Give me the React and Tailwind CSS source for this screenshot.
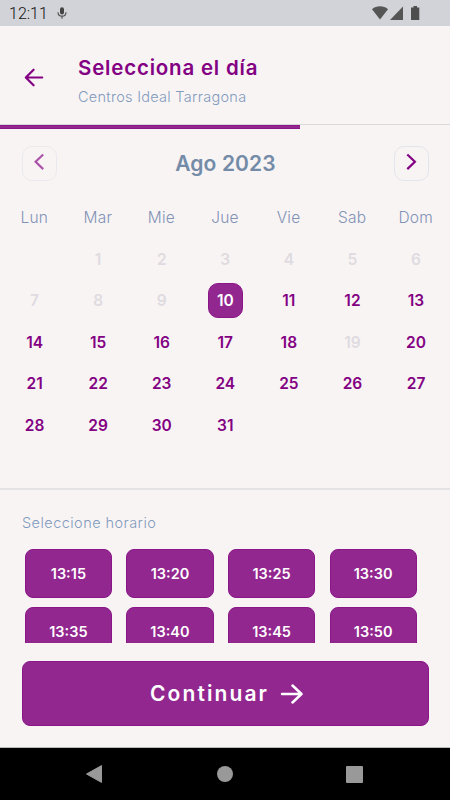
import React from 'react';
import clsx from 'clsx';

const weekdays = ['Lun', 'Mar', 'Mie', 'Jue', 'Vie', 'Sab', 'Dom'];

// August 2023 starts on a Tuesday
const days = [null, ...Array.from({ length: 31 }, (_, i) => i + 1)];
const unavailable = [1, 2, 3, 4, 5, 6, 7, 8, 9, 19];
const selectedDay = 10;

const slots = ['13:15', '13:20', '13:25', '13:30', '13:35', '13:40', '13:45', '13:50'];

function StatusBar() {
  return (
    <div className="h-[26px] shrink-0 bg-[#d2d3d8] flex items-center pl-[9px] pr-[30px]">
      <span className="w-[38px] font-['Roboto',sans-serif] font-light text-[16px] leading-[26px] text-[#111] mt-[2px]">12:11</span>
      <svg className="ml-[10px] w-[10px] h-[14px]" viewBox="0 0 10 14" fill="none">
        <rect x="3" y="1.2" width="4" height="7.3" rx="2" fill="#444" />
        <path d="M1 6.2c0 2.4 1.7 4 4 4s4-1.6 4-4M5 10.2v2.6" stroke="#555" strokeWidth="1.2" />
      </svg>
      <div className="ml-auto flex items-center">
        <svg className="w-[17px] h-[14px]" viewBox="0 0 17 14">
          <path d="M8 13.6L0 3.2C4.500-.6 11.500-.6 16 3.200z" fill="#555" />
        </svg>
        <svg className="ml-[1px] w-[14px] h-[14px]" viewBox="0 0 14 14">
          <path d="M13 .5V14H0z" fill="#555" />
        </svg>
        <svg className="ml-[7px] w-[9px] h-[14px]" viewBox="0 0 9 14">
          <path d="M2.500 0h3.500v1.500h2.300V14H0V1.500h2.500z" fill="#4d4d4d" />
        </svg>
      </div>
    </div>
  );
}

function Header() {
  return (
    <div className="h-[98px] shrink-0 flex pl-6">
      <button className="w-5 h-5 mt-[41px]">
        <svg className="w-5 h-5" viewBox="0 0 20 20" fill="none" stroke="#830083" strokeWidth="2.2" strokeLinecap="round" strokeLinejoin="round">
          <path d="M18.2 10.500H2M9.600 2.700L1.800 10.500l7.800 7.800" />
        </svg>
      </button>
      <div className="ml-[34px] pt-[28px]">
        <h1 className="text-[20.5px] leading-[28px] font-semibold tracking-[0.8px] text-[#830083] whitespace-nowrap">
          Selecciona el día
        </h1>
        <p className="mt-[2px] text-[14.5px] leading-[26px] font-light tracking-[0.28px] text-[#829bbd] whitespace-nowrap">
          Centros Ideal Tarragona
        </p>
      </div>
    </div>
  );
}

function MonthButton({ path, disabled }) {
  return (
    <button
      className={clsx(
        'w-[35px] h-[35px] rounded-[10px] border border-[#e3e5ec] flex justify-center pt-[6px]',
        disabled && 'opacity-65'
      )}
    >
      <svg className="w-[18px] h-[18px]" viewBox="0 0 18 18" fill="none" stroke="#830083" strokeWidth="2.2">
        <path d={path} />
      </svg>
    </button>
  );
}

function Calendar() {
  return (
    <div className="h-[359px] shrink-0">
      <div className="flex items-center justify-between pl-[22px] pr-[21px] pt-[17px]">
        <MonthButton path="M12.2 1.500L4.600 8.800l7.600 7.300" disabled />
        <h2 className="text-[21px] leading-[35px] font-semibold tracking-[0.1px] text-[#748ba7]">Ago 2023</h2>
        <MonthButton path="M5.300 1.500l7.600 7.300-7.600 7.300" />
      </div>
      <div className="grid grid-cols-7 px-[2.5px] mt-[26px]">
        {weekdays.map((day) => (
          <div key={day} className="text-center text-[15.5px] leading-[22px] tracking-[0.2px] text-[#8192b5] font-light">
            {day}
          </div>
        ))}
      </div>
      <div className="grid grid-cols-7 auto-rows-[41.5px] pl-[2.8px] pr-[2.2px] mt-[9.6px]">
        {days.map((day, i) => (
          <div key={i} className="flex items-center justify-center">
            {day && (
              <span
                className={clsx(
                  'w-[35px] h-[35px] rounded-[10px] flex items-center justify-center text-[15.5px] font-semibold',
                  day === selectedDay && 'bg-[#92278f] border border-[#8a1687] text-white',
                  day !== selectedDay && (unavailable.includes(day) ? 'text-[#dfdbe0]' : 'text-[#830083]')
                )}
              >
                {day}
              </span>
            )}
          </div>
        ))}
      </div>
    </div>
  );
}

export default function App() {
  return (
    <div className="w-[450px] h-[800px] overflow-hidden flex flex-col bg-[#f8f4f4] font-['Inter',sans-serif]">
      <StatusBar />
      <Header />

      {/* Progress */}
      <div className="h-[5px] shrink-0 border-t border-[#d9d9d9]">
        <div className="w-[300px] h-1 bg-[#92278f] border-y border-[#8a1687]" />
      </div>

      <Calendar />

      {/* Time slots */}
      <div className="h-[155px] shrink-0 overflow-hidden border-t-2 border-[#e5e3e4]">
        <h3 className="pl-[22px] pt-[21px] text-[14.5px] leading-[24px] font-light tracking-[0.45px] text-[#829bbd]">
          Seleccione horario
        </h3>
        <div className="mt-[14px] ml-[24.8px] grid grid-cols-[repeat(4,87.2px)] gap-x-[14.4px] gap-y-[9px]">
          {slots.map((slot) => (
            <button
              key={slot}
              className="h-[49px] rounded-lg bg-[#92278f] border border-[#8a1687] text-white text-[14.5px] font-semibold"
            >
              {slot}
            </button>
          ))}
        </div>
      </div>

      {/* Continue */}
      <div className="h-[105px] shrink-0 border-b border-[#bbb9b9] pt-[18px] pl-[22px] pr-[21px]">
        <button className="w-full h-[65px] rounded-lg bg-[#92278f] border border-[#8a1687] text-white flex items-center justify-center pl-[2px]">
          <span className="text-[21px] font-semibold tracking-[2.1px]">Continuar</span>
          <svg className="ml-[11px] w-[23px] h-[22px]" viewBox="0 0 23 22" fill="none" stroke="currentColor" strokeWidth="2.5" strokeLinecap="round" strokeLinejoin="round">
            <path d="M2 11h19.500M12.500 2.500l9 8.500-9 8.500" />
          </svg>
        </button>
      </div>

      {/* Android navigation */}
      <div className="h-[52px] shrink-0 bg-black flex items-center justify-between pl-[86px] pr-[87px]">
        <svg className="w-4 h-[18px]" viewBox="0 0 16 18">
          <path d="M15.500.600v16.800L.5 9z" fill="#999" stroke="#999" strokeLinejoin="round" />
        </svg>
        <div className="w-4 h-4 ml-[2px] rounded-full bg-[#999]" />
        <div className="w-[17px] h-[17px] rounded-[1px] bg-[#999]" />
      </div>
    </div>
  );
}
